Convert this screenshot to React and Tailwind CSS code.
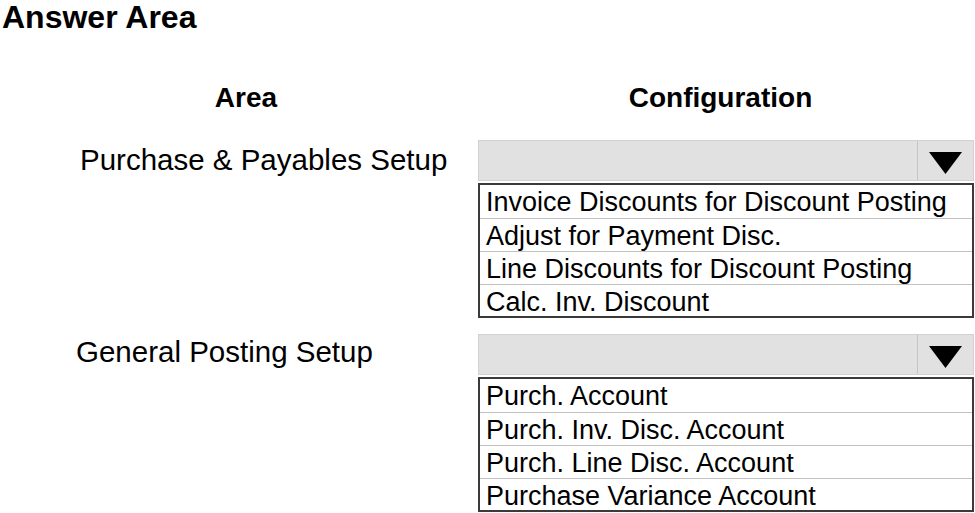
const sections = [
  {
    label: 'Purchase & Payables Setup',
    labelClass: 'pl-[80px] -mt-[1px]',
    options: [
      'Invoice Discounts for Discount Posting',
      'Adjust for Payment Disc.',
      'Line Discounts for Discount Posting',
      'Calc. Inv. Discount',
    ],
  },
  {
    label: 'General Posting Setup',
    labelClass: 'pl-[76px] -mt-[3px]',
    options: [
      'Purch. Account',
      'Purch. Inv. Disc. Account',
      'Purch. Line Disc. Account',
      'Purchase Variance Account',
    ],
  },
];

const Dropdown = ({ options }) => (
  <div className="w-[496px]">
    <div className="flex h-[41px] border border-[#d2d2d2] bg-[#e1e1e1]">
      <div className="flex-1" />
      <div className="flex w-[56px] items-center justify-center border-l border-[#c4c4c4] pt-[4px]">
        <svg width="33" height="22" viewBox="0 0 33 22">
          <polygon points="0,0 33,0 16.5,22" fill="#000" />
        </svg>
      </div>
    </div>
    <ul className="mt-[2px] h-[135px] border-2 border-[#3a3a3a] bg-white">
      {options.map((opt, i) => (
        <li
          key={opt}
          className={`flex h-[33px] items-center pl-[6px] pt-[2px] text-[27px] leading-none ${i > 0 ? 'border-t border-[#c2c2c2]' : ''}`}
        >
          {opt}
        </li>
      ))}
    </ul>
  </div>
);

export default function App() {
  return (
    <div className="h-[513px] w-[975px] overflow-hidden bg-white text-black font-['Liberation_Sans',Arial,sans-serif]">
      <h1 className="pl-[2px] pt-[1px] text-[32px] font-bold leading-[32px]">Answer Area</h1>

      <div className="mt-[51px] grid h-[28px] grid-cols-[478px_497px] text-[28px] font-bold leading-[28px]">
        <div className="pl-[14px] text-center">Area</div>
        <div className="pr-[12px] text-center">Configuration</div>
      </div>

      <div className="mt-[28px] flex flex-col gap-[16px]">
        {sections.map((s) => (
          <div key={s.label} className="grid grid-cols-[478px_497px]">
            <div className={`flex h-[41px] items-center text-[29.5px] leading-none ${s.labelClass}`}>
              {s.label}
            </div>
            <Dropdown options={s.options} />
          </div>
        ))}
      </div>
    </div>
  );
}
